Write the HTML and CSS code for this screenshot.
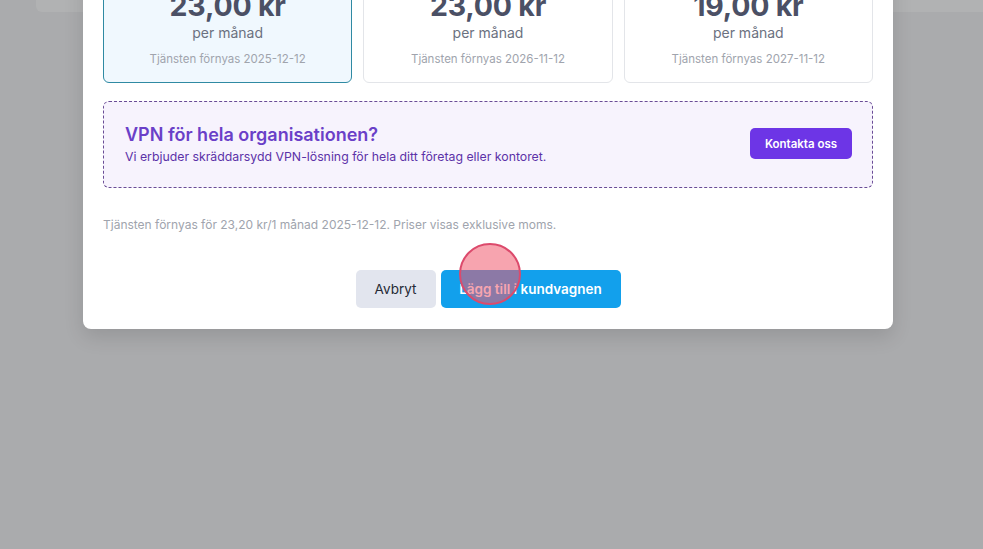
FILE: index.html
```html
<!DOCTYPE html>
<html lang="sv">
<head>
<meta charset="utf-8">
<title>VPN</title>
<link rel="stylesheet" href="styles.css">
</head>
<body>
<div class="page-card"></div>
<div class="modal">
  <div class="plans">
    <div class="plan selected">
      <div class="price">23,00 kr</div>
      <div class="period">per månad</div>
      <div class="renew">Tjänsten förnyas 2025-12-12</div>
    </div>
    <div class="plan">
      <div class="price">23,00 kr</div>
      <div class="period">per månad</div>
      <div class="renew">Tjänsten förnyas 2026-11-12</div>
    </div>
    <div class="plan">
      <div class="price">19,00 kr</div>
      <div class="period">per månad</div>
      <div class="renew">Tjänsten förnyas 2027-11-12</div>
    </div>
  </div>
  <div class="org">
    <div class="org-text">
      <div class="org-title">VPN för hela organisationen?</div>
      <div class="org-sub">Vi erbjuder skräddarsydd VPN-lösning för hela ditt företag eller kontoret.</div>
    </div>
    <button class="btn-contact">Kontakta oss</button>
  </div>
  <p class="note">Tjänsten förnyas för 23,20 kr/1 månad 2025-12-12. Priser visas exklusive moms.</p>
  <div class="actions">
    <button class="btn btn-cancel">Avbryt</button>
    <button class="btn btn-add">Lägg till i kundvagnen</button>
  </div>
</div>
<div class="cursor"></div>
</body>
</html>
```
FILE: styles.css
```css
* { box-sizing: border-box; }
html, body { margin: 0; height: 100%; }
body {
  background: #aaabad;
  font-family: "Inter", "Noto Sans", sans-serif;
  overflow: hidden;
  position: relative;
}
.page-card {
  margin-left: 36px;
  height: 12px;
  background: #b1b2b3;
  border-bottom-left-radius: 6px;
}
.modal {
  position: absolute;
  left: 83px;
  top: -44px;
  width: 810px;
  background: #fff;
  border-radius: 8px;
  padding: 20px 20px 21px;
  box-shadow: 0 8px 20px rgba(0,0,0,0.12);
}
.plans {
  display: grid;
  grid-template-columns: repeat(3, 1fr);
  gap: 11px;
}
.plan {
  border: 1px solid #e3e5e9;
  border-radius: 6px;
  padding: 13px 12px 15px;
  text-align: center;
  background: #fff;
}
.plan.selected {
  border-color: #2f8aa3;
  background: #f0f8fe;
}
.price {
  font-size: 28.5px;
  line-height: 32px;
  font-weight: 700;
  color: #4b5065;
  letter-spacing: -0.2px;
  margin-bottom: 3px;
}
.period {
  font-size: 14px;
  line-height: 16px;
  color: #6b7180;
}
.renew {
  margin-top: 10px;
  font-size: 11.5px;
  line-height: 16px;
  color: #a0a4ad;
}
.org {
  margin-top: 18px;
  border: 1px dashed #6a4c96;
  border-radius: 6px;
  background: #f7f3fd;
  height: 87px;
  padding: 0 20px 0 21px;
  display: flex;
  align-items: center;
  justify-content: space-between;
}
.org-title {
  font-size: 18px;
  line-height: 22px;
  font-weight: 600;
  color: #6a3fc8;
}
.org-sub {
  margin-top: 3px;
  font-size: 12.3px;
  line-height: 16px;
  color: #5c32a8;
}
.btn-contact {
  font-family: inherit;
  border: 0;
  border-radius: 5px;
  background: #6d35e6;
  color: #fff;
  font-size: 11.5px;
  font-weight: 600;
  width: 102px;
  height: 31px;
  margin-top: -2px;
}
.note {
  margin: 29px 0 0;
  font-size: 12px;
  line-height: 16px;
  color: #a0a4ad;
}
.actions {
  margin-top: 37px;
  display: flex;
  justify-content: center;
  gap: 5px;
}
.btn {
  font-family: inherit;
  border: 0;
  border-radius: 5px;
  height: 38px;
  font-size: 13.5px;
}
.btn-cancel {
  background: #e2e5ee;
  color: #252a36;
  width: 80px;
}
.btn-add {
  background: #12a0ec;
  color: #fff;
  font-weight: 600;
  width: 180px;
}
.cursor {
  position: absolute;
  left: 459px;
  top: 243px;
  width: 62px;
  height: 62px;
  border-radius: 50%;
  background: rgba(240, 90, 110, 0.55);
  border: 2px solid #dc4a6c;
}
```
